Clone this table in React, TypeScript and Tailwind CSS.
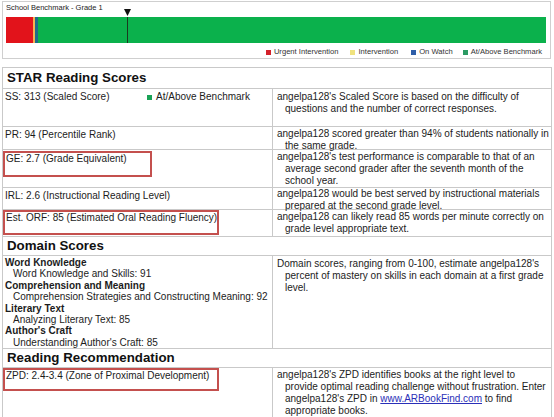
import React from "react";

const Right = ({ children, pt = "pt-[2px]" }: { children: React.ReactNode; pt?: string }) => (
  <div className={`flex-1 ${pt} pl-[12px] pr-[2px] -indent-[8px] leading-[12px]`}>{children}</div>
);

const Header = ({ title, h }: { title: string; h: string }) => (
  <div className={`${h} border-b border-[#c9c9c9] flex items-center pl-[4px] font-bold text-[13.3px] text-[#111]`}>
    {title}
  </div>
);

const RedBox = ({ w, h, children }: { w: string; h: string; children: React.ReactNode }) => (
  <div className={`${w} ${h} border-2 border-[#c4504e] pl-[1px] leading-[12px] whitespace-nowrap`}>{children}</div>
);

export default function App() {
  return (
    <div
      className="w-[554px] h-[417px] overflow-hidden bg-white text-[#1c1c1c] text-[10px]"
      style={{ fontFamily: '"Liberation Sans", Arial, sans-serif' }}
    >
      {/* Benchmark panel */}
      <div className="mt-[1px] ml-[2px] w-[549px] h-[58px] border border-[#cfcfcf] flex flex-col">
        <div className="pl-[3px] pt-[1px] text-[7.5px] leading-[10px] h-[15px]">School Benchmark - Grade 1</div>
        <div className="relative ml-[3px] w-[540px] h-[26px] flex">
          <div className="w-[27px] bg-[#e2131b]" />
          <div className="w-[2px] bg-[#f2b450]" />
          <div className="w-[3px] bg-[#1d6b8a]" />
          <div className="flex-1 bg-[#0bb14c]" />
          <div className="absolute left-[121px] top-0 w-[1px] h-[26px] bg-[#1b3a1f]" />
          <svg className="absolute left-[118px] -top-[8px]" width="7" height="7" viewBox="0 0 7 7">
            <path d="M0 0 H7 L3.5 7 Z" fill="#111" />
          </svg>
        </div>
        <div className="flex justify-end items-center pr-[8px] mt-[4px] text-[7.6px] leading-[10px] text-[#333]">
          <span className="w-[5px] h-[5px] bg-[#d4212b] mr-[3px]" />
          <span className="mr-[12px]">Urgent Intervention</span>
          <span className="w-[5px] h-[5px] bg-[#f0e27e] mr-[3px]" />
          <span className="mr-[13px]">Intervention</span>
          <span className="w-[5px] h-[5px] bg-[#2e5ea8] mr-[3px]" />
          <span className="mr-[10px]">On Watch</span>
          <span className="w-[5px] h-[5px] bg-[#2b9a63] mr-[3px]" />
          <span>At/Above Benchmark</span>
        </div>
      </div>

      {/* Table */}
      <div className="mt-[8px] ml-[2px] w-[550px] border-t border-l border-r border-[#c9c9c9]">
        <Header title="STAR Reading Scores" h="h-[21px]" />

        <div className="h-[38px] flex border-b border-[#c9c9c9]">
          <div className="w-[270px] border-r border-[#c9c9c9] pt-[2px] pl-[2px] flex leading-[12px]">
            <span className="w-[142px]">SS: 313 (Scaled Score)</span>
            <span className="w-[5px] h-[5px] bg-[#1aa256] mt-[4px] mr-[4px]" />
            <span>At/Above Benchmark</span>
          </div>
          <Right>angelpa128's Scaled Score is based on the difficulty of questions and the number of correct responses.</Right>
        </div>

        <div className="h-[23px] flex border-b border-[#c9c9c9]">
          <div className="w-[270px] border-r border-[#c9c9c9] pt-[2px] pl-[2px] leading-[12px]">PR: 94 (Percentile Rank)</div>
          <Right pt="pt-[1px]">angelpa128 scored greater than 94% of students nationally in the same grade.</Right>
        </div>

        <div className="h-[38px] flex border-b border-[#c9c9c9]">
          <div className="w-[270px] border-r border-[#c9c9c9] pt-[1px]">
            <RedBox w="w-[149px]" h="h-[26px]">GE: 2.7 (Grade Equivalent)</RedBox>
          </div>
          <Right pt="pt-[1px]">angelpa128's test performance is comparable to that of an average second grader after the seventh month of the school year.</Right>
        </div>

        <div className="h-[22px] flex border-b border-[#c9c9c9]">
          <div className="w-[270px] border-r border-[#c9c9c9] pt-[2px] pl-[2px] leading-[12px]">IRL: 2.6 (Instructional Reading Level)</div>
          <Right pt="pt-[0px]">angelpa128 would be best served by instructional materials prepared at the second grade level.</Right>
        </div>

        <div className="h-[27px] flex border-b border-[#c9c9c9]">
          <div className="w-[270px] border-r border-[#c9c9c9] pt-[0px]">
            <RedBox w="w-[216px]" h="h-[25px]">Est. ORF: 85 (Estimated Oral Reading Fluency)</RedBox>
          </div>
          <Right pt="pt-[1px]">angelpa128 can likely read 85 words per minute correctly on grade level appropriate text.</Right>
        </div>

        <Header title="Domain Scores" h="h-[19px]" />

        <div className="h-[93px] flex border-b border-[#c9c9c9]">
          <div className="w-[270px] border-r border-[#c9c9c9] pt-[1px] pl-[2px] leading-[11.4px]">
            <div className="font-bold">Word Knowledge</div>
            <div className="pl-[8px]">Word Knowledge and Skills: 91</div>
            <div className="font-bold">Comprehension and Meaning</div>
            <div className="pl-[8px]">Comprehension Strategies and Constructing Meaning: 92</div>
            <div className="font-bold">Literary Text</div>
            <div className="pl-[8px]">Analyzing Literary Text: 85</div>
            <div className="font-bold">Author's Craft</div>
            <div className="pl-[8px]">Understanding Author's Craft: 85</div>
          </div>
          <Right>Domain scores, ranging from 0-100, estimate angelpa128's percent of mastery on skills in each domain at a first grade level.</Right>
        </div>

        <Header title="Reading Recommendation" h="h-[19px]" />

        <div className="h-[50px] flex border-b border-[#c9c9c9]">
          <div className="w-[270px] border-r border-[#c9c9c9] pt-[0px]">
            <RedBox w="w-[216px]" h="h-[23px]">ZPD: 2.4-3.4 (Zone of Proximal Development)</RedBox>
          </div>
          <Right pt="pt-[1px]">
            angelpa128's ZPD identifies books at the right level to provide optimal reading challenge without frustration. Enter angelpa128's ZPD in{" "}
            <span className="text-[#2a2fb8] underline">www.ARBookFind.com</span> to find appropriate books.
          </Right>
        </div>
      </div>
    </div>
  );
}
